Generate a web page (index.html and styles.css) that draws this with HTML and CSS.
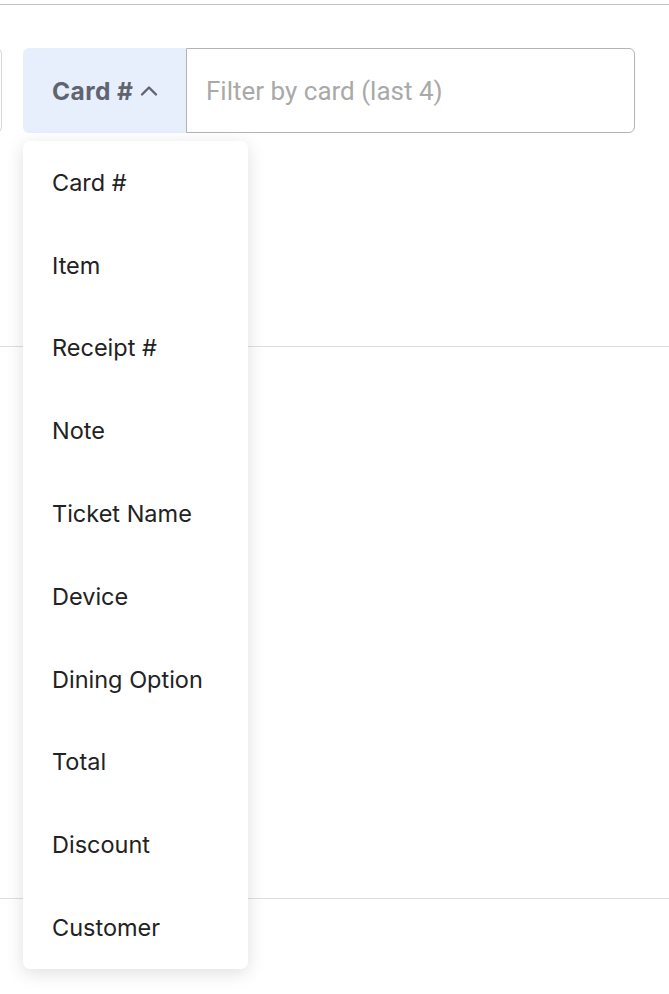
FILE: index.html
```html
<!DOCTYPE html>
<html>
<head>
<meta charset="utf-8">
<link rel="stylesheet" href="styles.css">
</head>
<body>
<div class="topbar"></div>
<div class="filter-row">
  <div class="prev-edge"></div>
  <div class="filter">
    <button class="filter-btn">Card # <svg class="chev" width="18" height="12" viewBox="0 0 18 12"><path d="M2 9.5 L9 2.5 L16 9.5" fill="none" stroke="#5f6470" stroke-width="2.4" stroke-linecap="round" stroke-linejoin="round"/></svg></button>
    <div class="filter-input">Filter by card (last 4)</div>
    <ul class="menu">
      <li>Card #</li>
      <li>Item</li>
      <li>Receipt #</li>
      <li>Note</li>
      <li>Ticket Name</li>
      <li>Device</li>
      <li>Dining Option</li>
      <li>Total</li>
      <li>Discount</li>
      <li>Customer</li>
    </ul>
  </div>
</div>
<div class="list">
  <div class="row row-a"></div>
  <div class="row row-b"></div>
  <div class="row row-c"></div>
</div>
</body>
</html>
```
FILE: styles.css
```css
html, body {
  margin: 0;
  padding: 0;
  background: #fff;
  font-family: Inter, "Noto Sans", sans-serif;
  overflow: hidden;
}
.topbar {
  height: 4px;
  border-bottom: 1px solid #c4c4c4;
}
.filter-row {
  display: flex;
  margin-top: 43px;
  height: 85px;
}
.prev-edge {
  width: 2px;
  margin-left: -8px;
  padding-left: 7px;
  border: 1px solid #d6d6d6;
  border-left: none;
  border-radius: 0 6px 6px 0;
  margin-right: 21px;
  box-sizing: content-box;
  height: 83px;
}
.filter {
  position: relative;
  display: flex;
  width: 612px;
}
.filter-btn {
  width: 163px;
  height: 85px;
  border: none;
  margin: 0;
  background: #e8effc;
  border-radius: 6px 0 0 6px;
  font-family: Inter, "Noto Sans", sans-serif;
  font-weight: 700;
  font-size: 24.5px;
  letter-spacing: 0.4px;
  color: #5f6470;
  display: flex;
  align-items: center;
  padding: 0 0 0 29px;
  gap: 7px;
  box-sizing: border-box;
  white-space: nowrap;
}
.chev {
  flex: none;
}
.filter-input {
  flex: 1;
  border: 1px solid #b4b4b4;
  border-radius: 0 6px 6px 0;
  display: flex;
  align-items: center;
  padding-left: 19px;
  font-family: Roboto, "Liberation Sans", sans-serif;
  font-size: 26px;
  color: #a9a9a9;
}
.menu {
  position: absolute;
  top: 93px;
  left: 0;
  width: 225px;
  margin: 0;
  padding: 0;
  list-style: none;
  background: #fff;
  border-radius: 7px;
  box-shadow: 0 4px 18px rgba(0, 0, 0, 0.13);
  z-index: 5;
}
.menu li {
  height: 82.8px;
  display: flex;
  align-items: center;
  padding-left: 29px;
  font-size: 23.5px;
  color: #222;
}
.row {
  border-bottom: 1px solid #dedede;
}
.row-a {
  height: 213px;
}
.row-b {
  height: 551px;
}
.row-c {
  height: 100px;
  border-bottom: none;
}
```
